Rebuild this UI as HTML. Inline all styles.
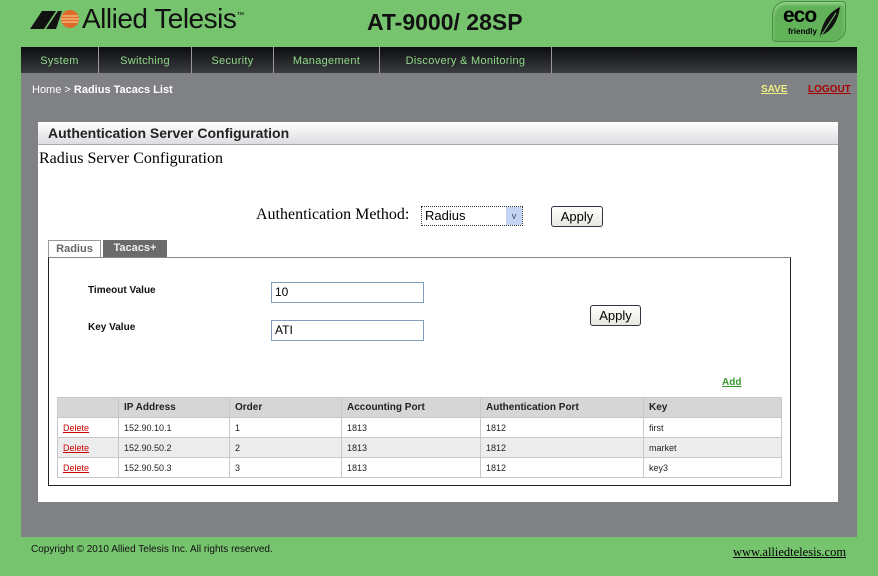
<!DOCTYPE html>
<html><head><style>
*{margin:0;padding:0;box-sizing:border-box}
body{width:878px;height:576px;background:#77c46f;position:relative;overflow:hidden;font-family:"Liberation Sans",sans-serif}
.a{position:absolute}
.nav{left:21px;top:47px;width:836px;height:26px;background:linear-gradient(#0c0d0f,#3a3c3f)}
.nav span{position:absolute;top:0;height:26px;line-height:28px;color:#8fd98a;font-size:11px;border-right:1px solid #9a9a9a;text-align:center;letter-spacing:0.3px}
.gray{left:21px;top:73px;width:836px;height:464px;background:#7f8184}
.panel{left:38px;top:122px;width:800px;height:380px;background:#fff}
.hdr{left:38px;top:122px;width:800px;height:23px;background:linear-gradient(#fff,#dcdde0);border-bottom:1px solid #aaa;font-size:14px;font-weight:bold;color:#222;padding:3px 10px}
.serif{font-family:"Liberation Serif",serif;color:#000}
.in{background:#fff;border:1px solid #7f9db9;font-size:12px;padding:2px 3px}
.btn{border:1px solid #334;border-radius:3px;background:linear-gradient(#fff,#e8e8e0);font-size:13px;text-align:center;line-height:19px}
table{border-collapse:collapse;font-size:9px;color:#222}
td{border:1px solid #c8c8c8;height:20px;padding-left:5px}
tr.h td{background:#d6d6d6;font-weight:bold;font-size:10px}
tr.g td{background:#ececec}
a{color:#c00;text-decoration:underline}
</style></head><body>
<div class="a" style="left:30px;top:8px;width:50px;height:22px">
<svg width="50" height="22"><polygon points="0,21 12,3 26,3 14,21" fill="#111"/><polygon points="16,21 28,3 32,3 26,21" fill="#111"/><circle cx="40" cy="11" r="9" fill="#e06a2a"/><path d="M32 8h16M31 11h18M32 14h16" stroke="#f6c38a" stroke-width="1.3"/></svg></div>
<div class="a" style="left:82px;top:3px;font-size:28px;color:#111;letter-spacing:-0.5px">Allied Telesis<sup style="font-size:8px">™</sup></div>
<div class="a" style="left:367px;top:9px;font-size:23px;font-weight:bold;color:#111">AT-9000/ 28SP</div>
<div class="a" style="left:772px;top:1px;width:74px;height:41px;background:#62b25a;border:1px solid #4a8e44;border-radius:14px 4px 14px 4px;box-shadow:inset 0 2px 3px #9ed896"></div>
<div class="a" style="left:783px;top:4px;font-size:21px;font-weight:bold;color:#000;letter-spacing:-1px">eco</div>
<div class="a" style="left:788px;top:27px;font-size:8px;font-weight:bold;color:#000">friendly</div>
<svg class="a" style="left:816px;top:5px" width="26" height="34"><path d="M4 32 C6 18 12 8 24 2 C22 16 16 26 6 30 Z" fill="#111"/><path d="M5 31 L20 8" stroke="#7c7" stroke-width="1"/></svg>
<div class="a nav">
<span style="left:0;width:78px">System</span><span style="left:78px;width:93px">Switching</span><span style="left:171px;width:82px">Security</span><span style="left:253px;width:106px">Management</span><span style="left:359px;width:172px">Discovery &amp; Monitoring</span>
</div>
<div class="a gray"></div>
<div class="a" style="left:32px;top:84px;font-size:11px;color:#fff">Home &gt; <b>Radius Tacacs List</b></div>
<div class="a" style="left:761px;top:84px;font-size:10px;font-weight:bold;color:#f0f080;text-decoration:underline">SAVE</div>
<div class="a" style="left:808px;top:84px;font-size:10px;font-weight:bold;color:#a00;text-decoration:underline">LOGOUT</div>
<div class="a panel"></div>
<div class="a hdr">Authentication Server Configuration</div>
<div class="a serif" style="left:39px;top:150px;font-size:16px">Radius Server Configuration</div>
<div class="a serif" style="left:256px;top:206px;font-size:16px">Authentication Method:</div>
<div class="a in" style="left:421px;top:206px;width:102px;height:20px;border:1px dotted #333;font-size:13px;padding:1px 3px">Radius</div>
<div class="a" style="left:506px;top:207px;width:16px;height:18px;background:#c4d4f4;color:#446;font-size:9px;text-align:center;line-height:18px">v</div>
<div class="a btn" style="left:551px;top:206px;width:52px;height:21px">Apply</div>
<div class="a" style="left:48px;top:240px;width:53px;height:18px;border:1px solid #999;border-bottom:none;font-size:11px;font-weight:bold;color:#666;text-align:center;line-height:17px;background:#fff">Radius</div>
<div class="a" style="left:103px;top:240px;width:64px;height:18px;background:#6b6b6b;font-size:11px;font-weight:bold;color:#eee;text-align:center;line-height:17px">Tacacs+</div>
<div class="a" style="left:48px;top:257px;width:743px;height:229px;border:1px solid #222;border-top-color:#888"></div>
<div class="a" style="left:88px;top:285px;font-size:10px;font-weight:bold;color:#111">Timeout Value</div>
<div class="a" style="left:88px;top:322px;font-size:10px;font-weight:bold;color:#111">Key Value</div>
<div class="a in" style="left:271px;top:282px;width:153px;height:21px">10</div>
<div class="a in" style="left:271px;top:320px;width:153px;height:21px">ATI</div>
<div class="a btn" style="left:590px;top:305px;width:51px;height:21px">Apply</div>
<div class="a" style="left:722px;top:377px;font-size:10px;font-weight:bold;color:#3a9a30;text-decoration:underline">Add</div>
<table class="a" style="left:57px;top:397px;width:725px">
<tr class="h"><td style="width:61px"></td><td style="width:111px">IP Address</td><td style="width:112px">Order</td><td style="width:139px">Accounting Port</td><td style="width:163px">Authentication Port</td><td>Key</td></tr>
<tr><td><a>Delete</a></td><td>152.90.10.1</td><td>1</td><td>1813</td><td>1812</td><td>first</td></tr>
<tr class="g"><td><a>Delete</a></td><td>152.90.50.2</td><td>2</td><td>1813</td><td>1812</td><td>market</td></tr>
<tr><td><a>Delete</a></td><td>152.90.50.3</td><td>3</td><td>1813</td><td>1812</td><td>key3</td></tr>
</table>
<div class="a" style="left:31px;top:544px;font-size:10px;color:#111">Copyright © 2010 Allied Telesis Inc. All rights reserved.</div>
<div class="a serif" style="left:733px;top:545px;font-size:12.5px;text-decoration:underline">www.alliedtelesis.com</div>
</body></html>
